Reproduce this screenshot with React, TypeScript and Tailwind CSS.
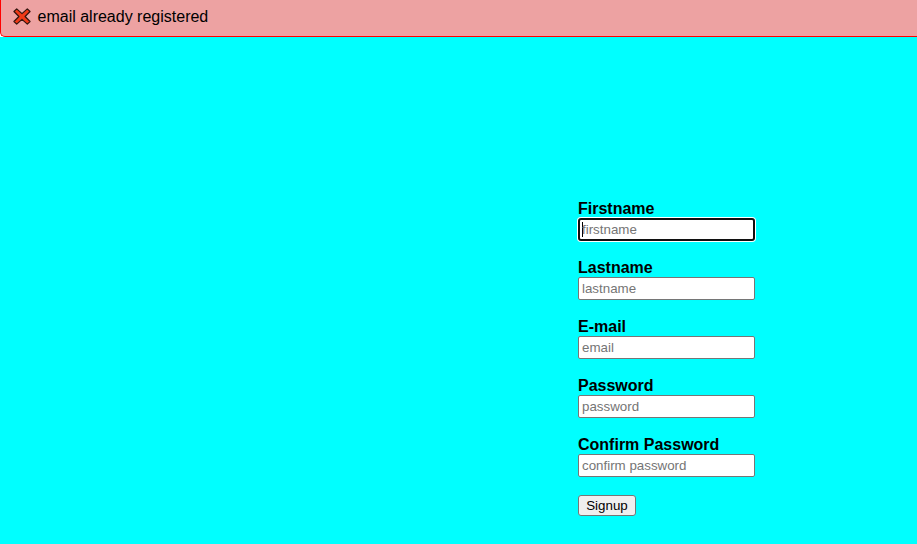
const fields = [
  { label: "Firstname", name: "firstname" },
  { label: "Lastname", name: "lastname" },
  { label: "E-mail", name: "email" },
  { label: "Password", name: "password" },
  { label: "Confirm Password", name: "confirm password" },
];

export default function App() {
  return (
    <div className="h-[544px] w-[917px] overflow-hidden bg-[#00ffff] font-['Liberation_Sans',Arial,sans-serif] text-black">
      <div className="h-[37px] bg-white">
        <div className="flex h-[37px] items-start rounded-bl-[5px] border-b border-l border-[#ff0000] bg-[#eda2a2]">
          <svg className="mt-2 ml-3 h-[17px] w-[18px]" viewBox="0 0 17 17" preserveAspectRatio="none">
            <path
              d="M0.9 3.5 3.5 0.9 8.5 5.6 13.5 0.9 16.1 3.5 11.4 8.5 16.1 13.5 13.5 16.1 8.5 11.4 3.5 16.1 0.9 13.5 5.6 8.5Z"
              fill="#f03a17"
              stroke="#35150f"
              strokeWidth="1.15"
              strokeLinejoin="round"
            />
          </svg>
          <span className="mt-2 ml-[6.5px] text-[16px] leading-[18px]">email already registered</span>
        </div>
      </div>
      <form className="mt-[162px] ml-[578px] flex w-[177px] flex-col">
        {fields.map((f, i) => (
          <label key={f.name} className="mb-[17px] block h-[42px]">
            <span className="block h-[19px] text-[16px] leading-[19px] font-bold">{f.label}</span>
            <span
              className={
                i === 0
                  ? "flex h-[23px] w-[177px] items-center rounded-[3px] border-2 border-[#101010] bg-white pl-[2px] ring-1 ring-white"
                  : "flex h-[23px] w-[177px] items-center rounded-[2px] border border-[#767676] bg-white pl-[3px]"
              }
            >
              {i === 0 && <span className="-mr-px h-[15px] w-px bg-black" />}
              <span className="text-[13.333px] leading-[15px] text-[#757575]">{f.name}</span>
            </span>
          </label>
        ))}
        <button type="button" className="mt-px h-[21px] w-[58px] rounded-[3px] border border-[#767676] bg-[#efefef] text-[13.333px] leading-[15px]">
          Signup
        </button>
      </form>
    </div>
  );
}
